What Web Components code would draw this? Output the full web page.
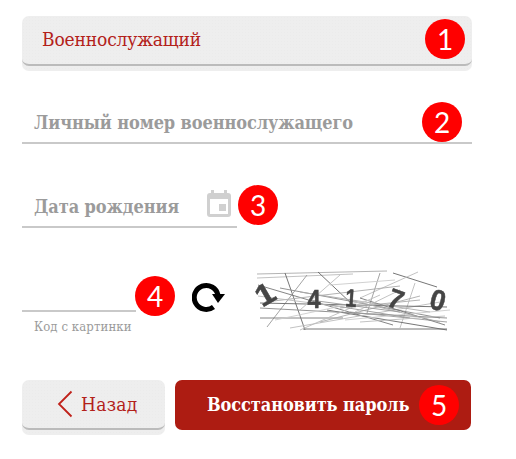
<!DOCTYPE html>
<html><head><meta charset="utf-8"><style>
html,body{margin:0;padding:0;background:#fff}
body{width:516px;height:459px;overflow:hidden;font-family:"DejaVu Serif Condensed","DejaVu Serif",serif}
main{display:flex;flex-direction:column;width:450px;padding:16px 0 0 22px}
.row{display:flex;align-items:flex-start;gap:10px}
</style></head><body>
<main>
<x-select n="1" style="margin-bottom:35px">Военнослужащий</x-select>
<x-field n="2" badge="left:400px;top:-4px" style="width:450px;margin-bottom:46px">Личный номер военнослужащего</x-field>
<x-field n="3" cal badge="left:216px;top:-5px" style="width:215px;margin-bottom:34px">Дата рождения</x-field>
<x-captcha style="margin-bottom:33px"></x-captcha>
<div class="row">
<x-back>Назад</x-back>
<x-primary n="5">Восстановить пароль</x-primary>
</div>
</main>
<template id="badge-t"><style>
:host{position:absolute;display:flex;width:40px;height:40px;border-radius:50%;background:#f00;color:#fff;align-items:center;justify-content:center;font:400 28px/40px Lato,sans-serif}
</style><slot></slot></template>
<script>
class Base extends HTMLElement{
 constructor(){super();this.attachShadow({mode:'open'})}
}
const S='"DejaVu Serif Condensed","DejaVu Serif",serif';
const dots='background-color:#eee;background-image:radial-gradient(#ebebeb .5px,transparent .6px);background-size:3px 3px;';
class XBadge extends Base{connectedCallback(){this.shadowRoot.append(document.getElementById('badge-t').content.cloneNode(true))}}
customElements.define('x-badge',XBadge);
class XSelect extends Base{connectedCallback(){
 this.shadowRoot.innerHTML=`<style>
 :host{display:block;position:relative;width:450px;height:55px;border-radius:7px;${dots}}
 .face{box-sizing:border-box;height:50px;border-bottom:2px solid #bbb;border-radius:0 0 7px 7px;padding:10px 0 0 20px;color:#b3211a;font:400 19px/26px ${S};letter-spacing:-.15px}
 x-badge{left:403px;top:3px}
 </style><div class="face"><slot></slot></div><x-badge>${this.getAttribute('n')}</x-badge>`}}
customElements.define('x-select',XSelect);
class XField extends Base{connectedCallback(){
 const cal=this.hasAttribute('cal')?`<svg class="cal" width="24" height="27" viewBox="0 0 24 27"><path fill="#d0d0d0" fill-rule="evenodd" d="M4 0h3v3h10V0h3v3h1a3 3 0 0 1 3 3v18a3 3 0 0 1-3 3H3a3 3 0 0 1-3-3V6a3 3 0 0 1 3-3h1zM3 9v15h18V9zM12 14h7v7h-7z"/></svg>`:'';
 this.shadowRoot.innerHTML=`<style>
 :host{display:block;position:relative;height:38px;box-sizing:border-box}
 .f{box-sizing:border-box;height:38px;border-bottom:2px solid #c9c9c9;padding:3px 0 0 12px;color:#9b9b9b;font:700 18px/28px ${S};letter-spacing:-.1px;white-space:nowrap}
 .cal{position:absolute;left:185px;top:0}
 x-badge{${this.getAttribute('badge')}}
 </style><div class="f"><slot></slot></div>${cal}<x-badge>${this.getAttribute('n')}</x-badge>`}}
customElements.define('x-field',XField);
class XCaptcha extends Base{connectedCallback(){
 const L=[[257,274,387,271,'#aaa'],[257,278,353,274,'#bbb'],[285,273,305,330,'#666'],[318,272,353,305,'#666'],[393,273,437,287,'#666'],[418,272,360,298,'#bbb'],[415,283,400,328,'#bbb'],[380,273,367,313,'#999'],[307,275,267,327,'#999'],[260,318,343,318,'#777'],[303,329,447,329,'#666'],[327,310,447,330,'#666'],[260,308,447,318,'#888'],[258,285,393,325,'#777'],[290,328,440,302,'#bbb'],[260,303,447,307,'#666'],[280,288,440,318,'#888'],[300,292,430,312,'#aaa'],[320,322,420,296,'#aaa'],[350,312,447,322,'#999'],[265,302,400,286,'#aaa'],[340,275,300,310,'#bbb'],[300,330,380,295,'#bbb'],[345,320,450,310,'#ccc'],[360,298,445,325,'#777'],[330,285,395,280,'#ccc'],[258,296,350,308,'#bbb'],[330,305,410,318,'#999'],[340,308,420,300,'#aaa'],[350,300,440,322,'#aaa'],[355,312,400,290,'#bbb'],[275,320,370,300,'#ccc'],[310,300,400,312,'#999'],[360,322,445,316,'#bbb']];
 const lines=L.map(l=>`<line x1="${l[0]-252}" y1="${l[1]-264}" x2="${l[2]-252}" y2="${l[3]-264}" stroke="${l[4]}" stroke-width=".9"/>`).join('');
 const D=[['1',13,30,-30,30,1.1],['4',62,35,0,26,.9],['1',99,34,3,25,.8],['7',144,35,20,27,1],['0',186,36,15,29,.95]];
 const txt=D.map(d=>`<text transform="translate(${d[1]} ${d[2]}) rotate(${d[3]}) scale(${d[5]} 1)" y="${(d[4]*.35).toFixed(1)}" text-anchor="middle" font-family="Liberation Sans,sans-serif" font-weight="700" font-size="${d[4]}" fill="#454545" stroke="#454545" stroke-width=".5">${d[0]}</text>`).join('');
 this.shadowRoot.innerHTML=`<style>
 :host{display:flex;position:relative;width:450px;height:85px}
 .c{width:114px;flex:none}
 .l{box-sizing:border-box;height:50px;width:114px;border-bottom:2px solid #c9c9c9}
 .h{font:400 13px/16px ${S};color:#9b9b9b;padding:7px 0 0 12px;letter-spacing:.1px;white-space:nowrap}
 x-badge{left:113px;top:14px}
 .r{margin:20px 0 0 56px;width:33px;height:30px;flex:none}
 .cap{margin:2px 0 0 27px;flex:none;filter:blur(.35px);overflow:visible}
 </style><div class="c"><div class="l"></div><div class="h">Код с картинки</div></div><x-badge>4</x-badge>
 <svg class="r" viewBox="0 0 33 30"><path d="M26 13A12 12 0 1 0 21.500 25" fill="none" stroke="#000" stroke-width="5"/><path d="M20 12H33l-7 9z" fill="#000"/></svg>
 <svg class="cap" width="205" height="72" viewBox="0 0 205 72">${lines}${txt}</svg>`}}
customElements.define('x-captcha',XCaptcha);
class XBack extends Base{connectedCallback(){
 this.shadowRoot.innerHTML=`<style>
 :host{display:block;position:relative;width:143px;height:55px;border-radius:7px;${dots}}
 .face{box-sizing:border-box;height:50px;border-bottom:2px solid #bbb;border-radius:0 0 7px 7px;display:flex;align-items:center;padding-left:35px;gap:8px;color:#b3211a;font:400 19px/24px ${S};letter-spacing:.3px}
 </style><div class="face"><svg width="16" height="28" viewBox="0 0 16 28"><path d="M14.500 1.500 2 14l12.500 12.500" fill="none" stroke="#c0211a" stroke-width="1.800"/></svg><slot></slot></div>`}}
customElements.define('x-back',XBack);
class XPrimary extends Base{connectedCallback(){
 this.shadowRoot.innerHTML=`<style>
 :host{display:block;position:relative;width:296px;height:50px;border-radius:7px;background:#ad1c12;color:#fff;font:700 18px/50px ${S};letter-spacing:-.1px}
 .t{padding-left:32px;white-space:nowrap}
 x-badge{left:244px;top:5px}
 </style><div class="t"><slot></slot></div><x-badge>${this.getAttribute('n')}</x-badge>`}}
customElements.define('x-primary',XPrimary);
</script>
</body></html>
